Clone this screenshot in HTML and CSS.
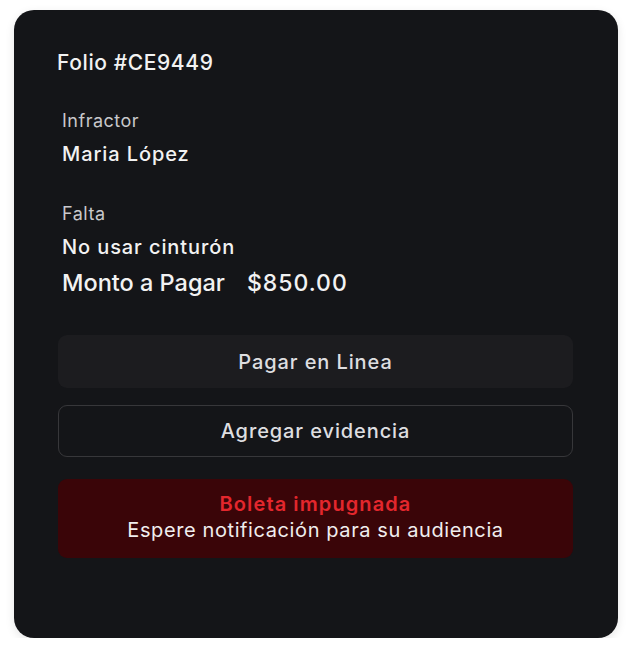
FILE: index.html
```html
<!DOCTYPE html>
<html lang="es">
<head>
<meta charset="utf-8">
<link rel="stylesheet" href="styles.css">
</head>
<body>
<div class="card">
  <h2 class="folio">Folio #CE9449</h2>
  <div class="info">
    <div class="field">
      <div class="label">Infractor</div>
      <div class="value">Maria López</div>
    </div>
    <div class="field">
      <div class="label">Falta</div>
      <div class="value">No usar cinturón</div>
    </div>
    <div class="amount">
      <span class="amount-label">Monto a Pagar</span>
      <span class="amount-value">$850.00</span>
    </div>
  </div>
  <div class="actions">
    <button class="btn btn-fill">Pagar en Linea</button>
    <button class="btn btn-outline">Agregar evidencia</button>
  </div>
  <div class="alert">
    <div class="alert-title">Boleta impugnada</div>
    <div class="alert-text">Espere notificación para su audiencia</div>
  </div>
</div>
</body>
</html>
```
FILE: styles.css
```css
* { box-sizing: border-box; }
body {
  margin: 0;
  background: #ffffff;
  font-family: Inter, "Noto Sans", sans-serif;
}
.card {
  margin: 10px 0 0 14px;
  width: 604px;
  height: 628px;
  background: #141518;
  border-radius: 20px;
  box-shadow: 0 3px 10px rgba(0,0,0,0.10);
  padding: 40px 45px 0 44px;
  color: #f2f2f2;
}
.folio {
  margin: 0 0 0 -1px;
  font-size: 21px;
  font-weight: 500;
  line-height: 26px;
  letter-spacing: 0.6px;
}
.info {
  padding: 0 4px;
  margin-top: 34px;
}
.field + .field { margin-top: 37px; }
.label {
  font-size: 18px;
  color: #c8c8cb;
  line-height: 22px;
  letter-spacing: 0.5px;
}
.value {
  font-size: 20px;
  font-weight: 500;
  line-height: 24px;
  margin-top: 10px;
  letter-spacing: 0.9px;
}
.amount {
  display: flex;
  align-items: baseline;
  gap: 22px;
  margin-top: 10px;
  line-height: 28px;
}
.amount-label {
  font-size: 23.5px;
  font-weight: 500;
}
.amount-value {
  font-size: 23px;
  font-weight: 500;
  letter-spacing: 1px;
}
.actions {
  display: flex;
  flex-direction: column;
  gap: 17px;
  margin-top: 38px;
}
.btn {
  height: 53px;
  width: 100%;
  border-radius: 9px;
  font-family: inherit;
  font-size: 20px;
  font-weight: 500;
  letter-spacing: 0.9px;
  color: #dedee0;
  cursor: pointer;
}
.btn-fill {
  background: #1c1c1f;
  border: none;
}
.btn-outline {
  background: transparent;
  border: 1px solid #37373a;
  height: 52px;
}
.alert {
  margin-top: 22px;
  height: 79px;
  background: #3a0508;
  border-radius: 9px;
  text-align: center;
  padding-top: 12px;
}
.alert-title {
  color: #e3272d;
  font-size: 20px;
  font-weight: 600;
  line-height: 26px;
  letter-spacing: 1.1px;
}
.alert-text {
  color: #f0eeee;
  font-size: 20px;
  line-height: 26px;
  letter-spacing: 0.6px;
}
```
